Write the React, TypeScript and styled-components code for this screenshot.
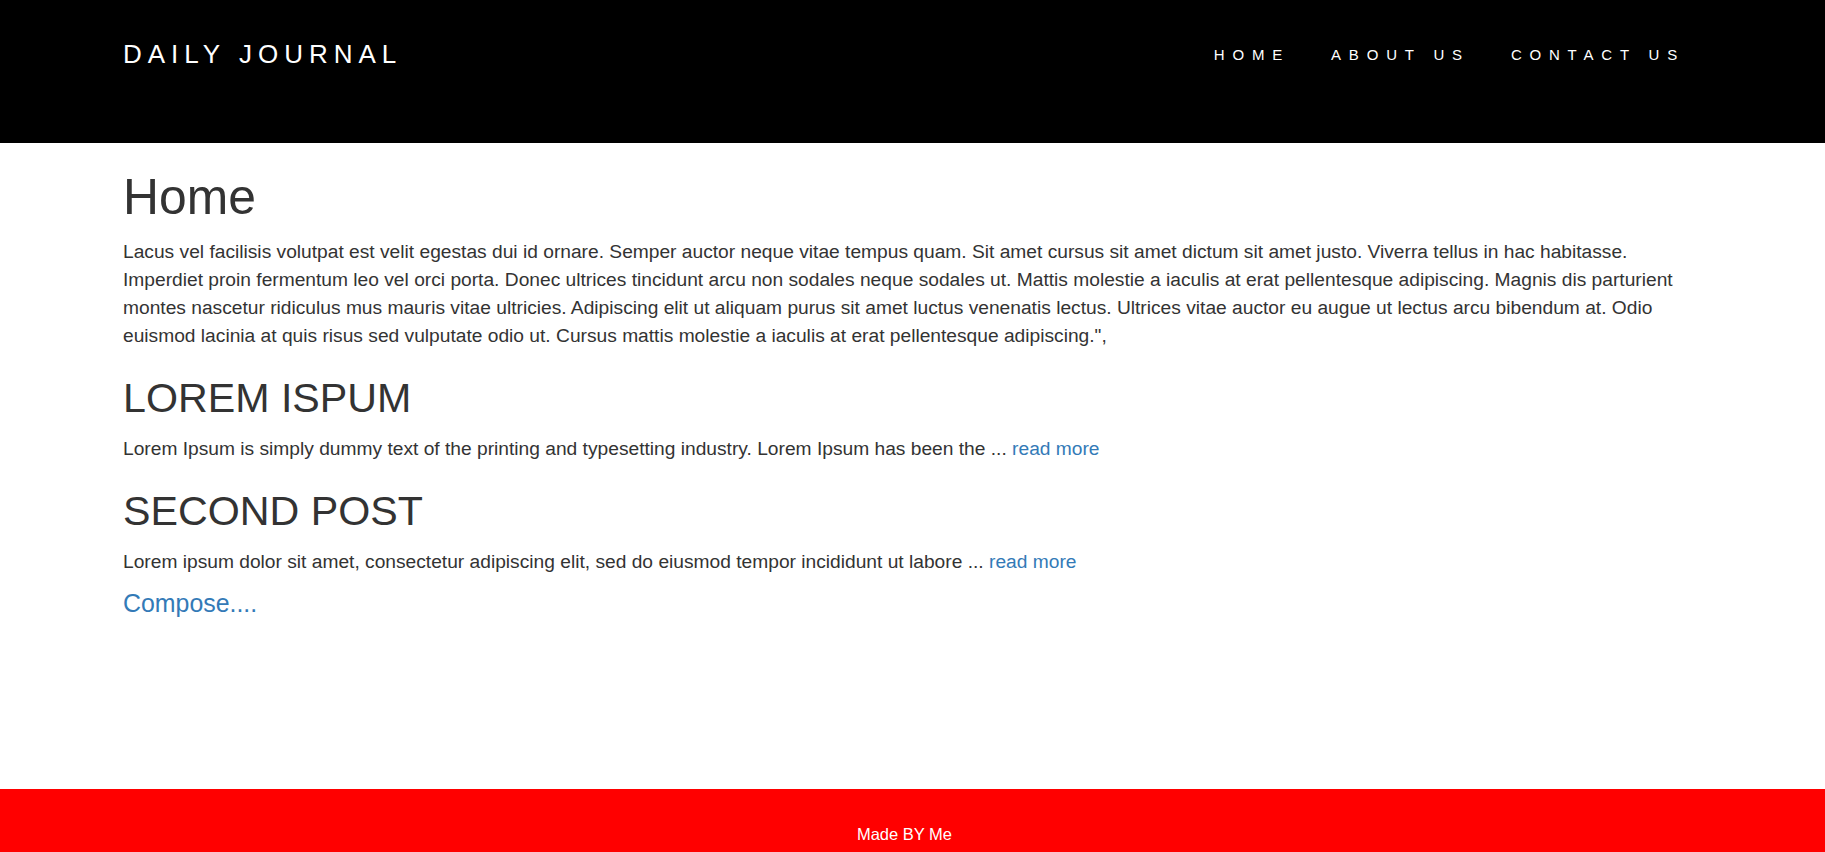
import React from "react";
import styled, { createGlobalStyle } from "styled-components";

const GlobalStyle = createGlobalStyle`
  html, body {
    margin: 0;
    padding: 0;
    background: #ffffff;
  }
  body {
    font-family: "Liberation Sans", Arial, Helvetica, sans-serif;
    color: #333333;
    overflow: hidden;
  }
  * { box-sizing: border-box; }
`;

const Page = styled.div`
  display: flex;
  flex-direction: column;
  min-height: 100vh;
`;

const Header = styled.header`
  background: #000000;
  height: 143px;
  display: flex;
  align-items: flex-start;
  padding: 39px 140px 0 123px;
`;

const Brand = styled.a`
  color: #ffffff;
  font-size: 26px;
  line-height: 30px;
  letter-spacing: 6px;
  text-decoration: none;
  white-space: nowrap;
`;

const Nav = styled.nav`
  margin-left: auto;
  margin-top: 6px;
  display: flex;
  gap: 41px;
`;

const NavLink = styled.a`
  color: #ffffff;
  font-size: 15px;
  line-height: 20px;
  letter-spacing: 7.8px;
  text-decoration: none;
  white-space: nowrap;
`;

const Main = styled.main`
  flex: 1;
  display: flex;
  flex-direction: column;
  padding: 28px 124px 0 123px;
`;

const PageTitle = styled.h1`
  margin: 0 0 14px;
  font-size: 49.8px;
  line-height: 52.8px;
  font-weight: 400;
  color: #333333;
`;

const Text = styled.p<{ $after?: number }>`
  margin: 0 0 ${(p) => p.$after ?? 0}px;
  font-size: 19.2px;
  line-height: 28px;
  color: #333333;
`;

const PostTitle = styled.h2`
  margin: 0 0 15px;
  font-size: 41.2px;
  line-height: 44px;
  font-weight: 400;
  color: #333333;
`;

const Link = styled.a`
  color: #337ab7;
  text-decoration: none;
`;

const Compose = styled.a`
  align-self: flex-start;
  color: #337ab7;
  font-size: 24.9px;
  line-height: 30px;
  text-decoration: none;
`;

const Footer = styled.footer`
  background: #ff0000;
  height: 63px;
  padding: 35px 16px 0 0;
  text-align: center;
  color: #ffffff;
  font-size: 16.5px;
  line-height: 20px;
`;

const posts = [
  {
    title: "LOREM ISPUM",
    excerpt:
      "Lorem Ipsum is simply dummy text of the printing and typesetting industry. Lorem Ipsum has been the ...",
  },
  {
    title: "SECOND POST",
    excerpt:
      "Lorem ipsum dolor sit amet, consectetur adipiscing elit, sed do eiusmod tempor incididunt ut labore ...",
  },
];

export default function App() {
  return (
    <Page>
      <GlobalStyle />
      <Header>
        <Brand href="#">DAILY JOURNAL</Brand>
        <Nav>
          <NavLink href="#">HOME</NavLink>
          <NavLink href="#">ABOUT US</NavLink>
          <NavLink href="#">CONTACT US</NavLink>
        </Nav>
      </Header>
      <Main>
        <PageTitle>Home</PageTitle>
        <Text $after={26.5}>
          Lacus vel facilisis volutpat est velit egestas dui id ornare. Semper auctor neque vitae tempus quam. Sit amet
          cursus sit amet dictum sit amet justo. Viverra tellus in hac habitasse. Imperdiet proin fermentum leo vel orci
          porta. Donec ultrices tincidunt arcu non sodales neque sodales ut. Mattis molestie a iaculis at erat
          pellentesque adipiscing. Magnis dis parturient montes nascetur ridiculus mus mauris vitae ultricies.
          Adipiscing elit ut aliquam purus sit amet luctus venenatis lectus. Ultrices vitae auctor eu augue ut lectus
          arcu bibendum at. Odio euismod lacinia at quis risus sed vulputate odio ut. Cursus mattis molestie a iaculis
          at erat pellentesque adipiscing.",
        </Text>
        {posts.map((post, i) => (
          <React.Fragment key={post.title}>
            <PostTitle>{post.title}</PostTitle>
            <Text $after={i === posts.length - 1 ? 12 : 26}>
              {post.excerpt} <Link href="#">read more</Link>
            </Text>
          </React.Fragment>
        ))}
        <Compose href="#">Compose....</Compose>
      </Main>
      <Footer>Made BY Me</Footer>
    </Page>
  );
}
